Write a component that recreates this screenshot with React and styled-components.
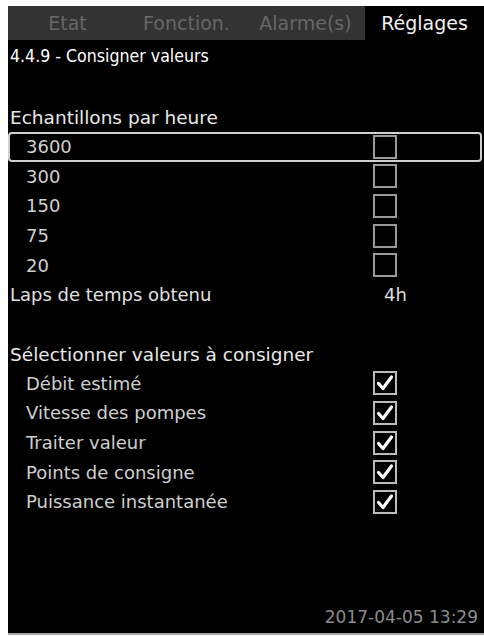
import React from "react"
import styled, { createGlobalStyle } from "styled-components"

const GlobalStyle = createGlobalStyle`
  html, body {
    margin: 0;
    padding: 0;
    background: #fff;
  }
  body {
    padding: 6px 0 0 8px;
    font-family: "DejaVu Sans", "Liberation Sans", sans-serif;
  }
`

const tabs = ["Etat", "Fonction.", "Alarme(s)", "Réglages"]

const samples = [
  { label: "3600", checked: false, selected: true },
  { label: "300", checked: false },
  { label: "150", checked: false },
  { label: "75", checked: false },
  { label: "20", checked: false },
]

const logged = [
  "Débit estimé",
  "Vitesse des pompes",
  "Traiter valeur",
  "Points de consigne",
  "Puissance instantanée",
]

const CheckMark = () => (
  <svg width="20" height="20" viewBox="0 0 20 20">
    <path
      d="M3.5 10.5 L8 15.5 L16.5 4"
      fill="none"
      stroke="#fff"
      strokeWidth="3.2"
      strokeLinecap="round"
      strokeLinejoin="round"
    />
  </svg>
)

const App = () => {
  return (
    <>
      <GlobalStyle />
      <Screen>
        <TabBar>
          {tabs.map((t, i) => (
            <Tab key={t} $active={i === tabs.length - 1}>
              {t}
            </Tab>
          ))}
        </TabBar>

        <Title>4.4.9 - Consigner valeurs</Title>

        <List>
          <Header>Echantillons par heure</Header>
          {samples.map((s) => (
            <Row key={s.label} $selected={s.selected}>
              <Label>{s.label}</Label>
              <Box $checked={s.checked} />
            </Row>
          ))}
          <Row>
            <Label $header>Laps de temps obtenu</Label>
            <Value>4h</Value>
          </Row>

          <Header $gap>Sélectionner valeurs à consigner</Header>
          {logged.map((l) => (
            <Row key={l}>
              <Label>{l}</Label>
              <Box $checked>
                <CheckMark />
              </Box>
            </Row>
          ))}
        </List>

        <Footer>2017-04-05 13:29</Footer>
      </Screen>
    </>
  )
}

const Screen = styled.div`
  width: 476px;
  height: 627px;
  background: #000;
  border-bottom: 2px solid #a8a8a8;
  display: flex;
  flex-direction: column;
  overflow: hidden;
`

const TabBar = styled.div`
  display: grid;
  grid-template-columns: repeat(4, 1fr);
  height: 34px;
  background: #333;
`

const Tab = styled.div`
  display: flex;
  align-items: center;
  justify-content: center;
  font-size: 19px;
  color: ${(p) => (p.$active ? "#f0f0f0" : "#666")};
  background: ${(p) => (p.$active ? "#000" : "transparent")};
`

const Title = styled.div`
  height: 32px;
  line-height: 32px;
  padding-left: 2px;
  font-family: "DejaVu Sans Condensed", "DejaVu Sans", sans-serif;
  font-stretch: condensed;
  font-size: 17.6px;
  color: #fff;
  white-space: nowrap;
`

const List = styled.div`
  margin-top: 32px;
  display: flex;
  flex-direction: column;
`

const Header = styled.div`
  height: ${(p) => (p.$gap ? "29px" : "28px")};
  line-height: ${(p) => (p.$gap ? "29px" : "28px")};
  padding-left: 2px;
  margin-top: ${(p) => (p.$gap ? "30px" : "0")};
  font-size: 18.5px;
  color: #e8e8e8;
  white-space: nowrap;
`

const Row = styled.div`
  box-sizing: border-box;
  height: 29.6px;
  margin-right: 2px;
  display: grid;
  grid-template-columns: 363px 24px 1fr;
  align-items: center;
  border: 2px solid ${(p) => (p.$selected ? "#cfcfcf" : "transparent")};
  border-radius: 4px;
`

const Label = styled.div`
  padding-left: ${(p) => (p.$header ? "0" : "16px")};
  font-size: 18px;
  color: ${(p) => (p.$header ? "#e0e0e0" : "#cfcfcf")};
  white-space: nowrap;
`

const Box = styled.div`
  box-sizing: border-box;
  width: 24px;
  height: 24px;
  border: 2px solid ${(p) => (p.$checked ? "#bdbdbd" : "#9a9a9a")};
  display: flex;
  align-items: center;
  justify-content: center;
`

const Value = styled.div`
  grid-column: 2 / span 2;
  padding-left: 11px;
  font-size: 18px;
  color: #dcdcdc;
`

const Footer = styled.div`
  margin-top: auto;
  height: 32px;
  line-height: 32px;
  text-align: right;
  padding-right: 6px;
  font-size: 17px;
  color: #8c8c8c;
`

export default App
